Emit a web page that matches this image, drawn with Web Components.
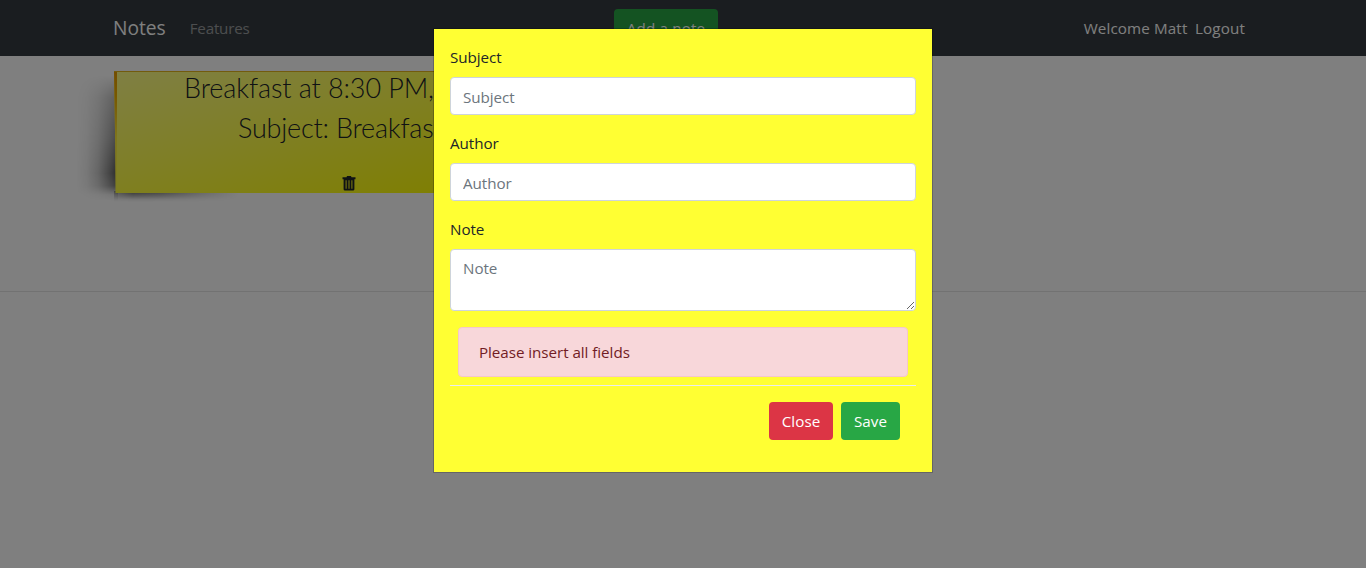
<!DOCTYPE html>
<html lang="en">
<head>
<meta charset="utf-8">
<title>Notes</title>
<style>
  html, body { margin: 0; height: 100%; overflow: hidden; }
  body { background: #fff; color: #212529; font: 15.2px/24px "Open Sans", "Noto Sans", sans-serif; letter-spacing: -0.05px; }
</style>
</head>
<body>
<notes-app></notes-app>
<script>
const define = (name, html) => customElements.define(name, class extends HTMLElement {
  constructor() {
    super();
    this.attachShadow({ mode: 'open' }).innerHTML = html;
  }
});

define('app-button', `<style>
  :host { display: block; }
  button { display: block; width: 100%; height: 38px; padding: 0; border: 0; border-radius: 4px; background: var(--fill, #28a745); color: #fff; font: inherit; letter-spacing: inherit; }
</style><button type="button"><slot></slot></button>`);

define('nav-bar', `<style>
  :host { display: grid; grid-template-columns: 501px 104px 1fr; align-items: center; height: 56px; padding: 0 121px 0 113px; box-sizing: border-box; background: #343a40; color: #fff; }
  .left { display: flex; align-items: center; gap: 24px; }
  .brand { font-size: 19.2px; letter-spacing: 0; }
  .link { color: rgba(255,255,255,.5); letter-spacing: -.22px; }
  app-button { letter-spacing: .15px; }
  .right { display: flex; justify-content: flex-end; gap: 7.5px; }
  .user { letter-spacing: .12px; }
  .out { letter-spacing: .15px; }
</style>
<div class="left"><span class="brand">Notes</span><span class="link">Features</span></div>
<app-button>Add a note</app-button>
<div class="right"><span class="user">Welcome Matt</span><span class="out">Logout</span></div>`);

define('trash-icon', `<style>:host { display: block; width: 14px; height: 16px; } svg { display: block; }</style>
<svg width="14" height="16" viewBox="0 0 14 16"><path fill="#212529" fill-rule="evenodd" d="M.5 2.2h4L5 1h4l.5 1.2h4v2H12.4V14.2q0 1.3-1.3 1.3H2.9q-1.3 0-1.3-1.3V4.2H.5zM3.6 5.3v8.4h1V5.3zM6.5 5.3v8.4h1V5.3zM9.4 5.3v8.4h1V5.3z"/></svg>`);

define('sticky-note', `<style>
  :host { display: block; position: relative; width: 469px; height: 122px; z-index: 0; }
  .shade { position: absolute; z-index: -1; left: -38px; top: 4px; width: 42px; height: 126px;
    background: linear-gradient(to left, rgba(0,0,0,.68), rgba(0,0,0,.42) 24%, rgba(0,0,0,.2) 48%, rgba(0,0,0,.06) 75%, transparent);
    mask-image: linear-gradient(rgba(0,0,0,0), rgba(0,0,0,.4) 18%, rgba(0,0,0,.65) 50%, #000 78%, rgba(0,0,0,.8) 88%, rgba(0,0,0,.15) 95%, transparent); }
  .under { position: absolute; z-index: -1; left: 0; top: 120px; width: 125px; height: 11px;
    background: linear-gradient(rgba(0,0,0,.6), rgba(0,0,0,.3) 45%, rgba(0,0,0,.08) 75%, transparent);
    mask-image: linear-gradient(to right, rgba(0,0,0,.5), #000 15%, rgba(0,0,0,.85) 35%, rgba(0,0,0,.35) 70%, transparent); }
  .paper { height: 100%; box-sizing: border-box; display: flex; flex-direction: column; background: linear-gradient(164deg, #ffff88 0%, #ffff50 38%, #ffff00 88%); clip-path: polygon(0 0, 100% 0, 100% 100%, 1.5px 100%, 1px 50%); border-top: 1px solid #e5b71c; position: relative; }
  .edge { position: absolute; left: 0; top: 0; width: 3px; height: 100%; background: linear-gradient(#e79a00, #efb000 20%, rgba(255,210,0,.4) 55%, rgba(255,240,0,0)); }
  .line { white-space: pre; height: 40px; font: 300 27px/31px Lato, sans-serif; letter-spacing: -.1px; }
  .first { padding-left: 70px; }
  .second { padding-left: 124px; letter-spacing: -.2px; }
  trash-icon { margin: 23px 0 0 228px; }
</style>
<div class="shade"></div><div class="under"></div>
<div class="paper"><div class="edge"></div><div class="line first"><slot name="title"></slot></div><div class="line second"><slot name="subject"></slot></div><trash-icon></trash-icon></div>`);

define('form-field', `<style>
  :host { display: flex; flex-direction: column; gap: 8px; }
  label { height: 24px; }
  input, textarea { display: block; box-sizing: border-box; width: 100%; height: 38px; margin: 0; padding: 6px 12px; border: 1px solid #ced4da; border-radius: 4px; background: #fff; color: #495057; font: inherit; letter-spacing: inherit; outline: 0; }
  input { padding: 8px 12px 6px; }
  textarea { height: 62px; resize: vertical; overflow: auto; }
  ::placeholder { color: #6c757d; opacity: 1; }
  :host([multiline]) input, :host(:not([multiline])) textarea { display: none; }
</style><label><slot></slot></label><input><textarea></textarea>`);

define('alert-box', `<style>
  :host { display: block; box-sizing: border-box; height: 50px; margin: 0 8px 8px; padding: 12px 20px; border: 1px solid #f5c6cb; border-radius: 4px; background: #f8d7da; color: #721c24; }
</style><slot></slot>`);

define('note-dialog', `<style>
  :host { display: block; position: absolute; inset: 0; z-index: 5; background: rgba(0,0,0,.5); }
  .box { width: 498px; height: 443px; margin: 28px auto 0; border: 1px solid rgba(0,0,0,.2); background: #ffff33 padding-box; }
  form { display: flex; flex-direction: column; gap: 16px; padding: 16px; }
  footer { display: flex; justify-content: flex-end; gap: 8px; margin-top: -16px; padding: 16px; border-top: 1px solid #e9ecef; }
  .close { width: 64px; --fill: #dc3545; letter-spacing: .05px; }
  .save { width: 59px; letter-spacing: .05px; }
</style>
<div class="box"><form>
  <form-field hint="Subject">Subject</form-field>
  <form-field hint="Author">Author</form-field>
  <form-field hint="Note" multiline>Note</form-field>
  <alert-box>Please insert all fields</alert-box>
  <footer><app-button class="close">Close</app-button><app-button class="save">Save</app-button></footer>
</form></div>`);

define('notes-app', `<style>
  :host { display: block; position: relative; height: 100%; overflow: hidden; }
  main { height: 236px; box-sizing: border-box; padding: 15px 0 0 114px; border-bottom: 1px solid rgba(0,0,0,.1); }
</style>
<nav-bar></nav-bar>
<main><sticky-note><span slot="title">Breakfast at 8:30 PM,</span><span slot="subject">Subject: Breakfast</span></sticky-note></main>
<note-dialog></note-dialog>`);

const dialog = document.querySelector('notes-app').shadowRoot.querySelector('note-dialog').shadowRoot;
for (const field of dialog.querySelectorAll('form-field')) {
  for (const control of field.shadowRoot.querySelectorAll('input, textarea')) control.placeholder = field.getAttribute('hint');
}
</script>
</body>
</html>
